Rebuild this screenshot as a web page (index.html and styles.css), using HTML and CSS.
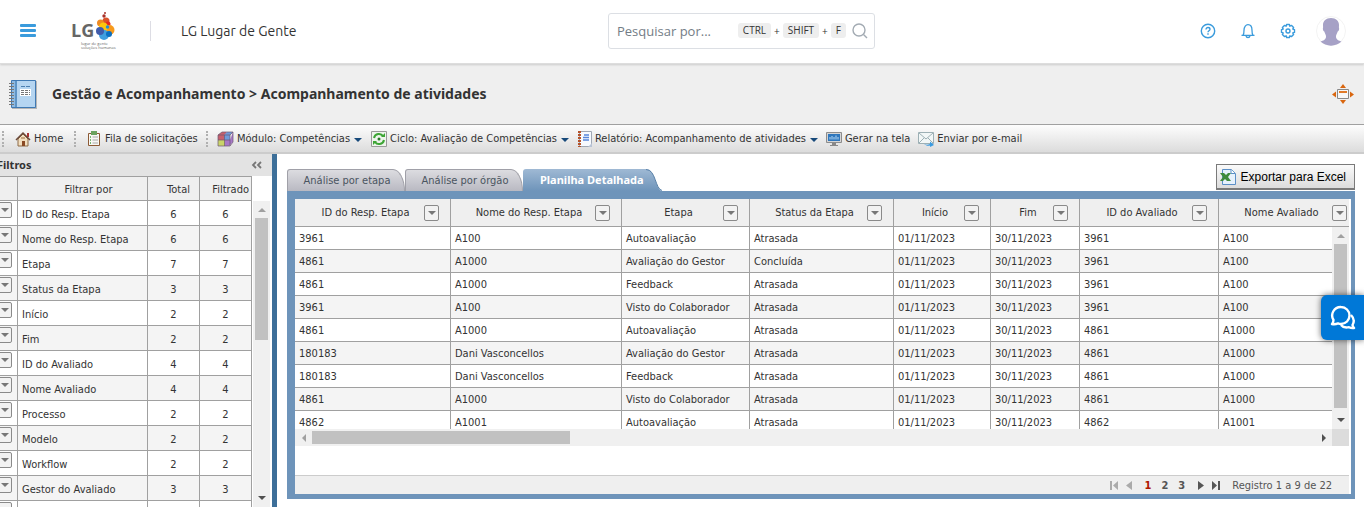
FILE: index.html
```html
<!DOCTYPE html>
<html lang="pt-BR">
<head>
    <meta charset="UTF-8">
    <meta name="viewport" content="width=device-width, initial-scale=1.0">
    <title>Acompanhamento de atividades</title>
    <link rel="stylesheet" href="styles.css">
</head>
<body>
    <!-- Top bar -->
    <header class="topbar">
        <button type="button" class="icon-btn menu-btn" aria-label="Menu">
            <svg width="16" height="14" viewBox="0 0 16 14" fill="#3a9bdc"><rect width="16" height="3" rx="1"/><rect y="5" width="16" height="3" rx="1"/><rect y="10" width="16" height="3" rx="1"/></svg>
        </button>
        <a href="#" class="logo" aria-label="LG Lugar de Gente">
            <span class="logo-name">LG</span>
            <svg class="logo-drops" width="20" height="30" viewBox="0 0 20 30">
                <circle cx="9" cy="2" r="1" fill="#a8322a"/><circle cx="8" cy="5" r="1.700" fill="#a8322a"/>
                <circle cx="10" cy="10" r="3.500" fill="#d9532c"/><circle cx="4.500" cy="12" r="3.500" fill="#ee8a22"/>
                <circle cx="12" cy="13" r="2.500" fill="#e3281f"/><circle cx="13.500" cy="19" r="5" fill="#f79a1c"/>
                <circle cx="7.500" cy="16" r="4.500" fill="#fcc60e"/><circle cx="8" cy="24" r="5" fill="#3f9fe0"/>
                <circle cx="4" cy="20" r="4" fill="#3f5cab"/><circle cx="13" cy="23" r="3" fill="#0b6fc0"/>
                <circle cx="11.500" cy="16" r="1.700" fill="#1f8fd6"/>
            </svg>
            <small class="logo-tag">lugar de gente<br>soluções humanas</small>
        </a>
        <span class="company">LG Lugar de Gente</span>
        <div class="search">
            <input type="text" placeholder="Pesquisar por..." aria-label="Pesquisar por">
            <kbd>CTRL</kbd>+<kbd>SHIFT</kbd>+<kbd>F</kbd>
            <svg class="lens" width="16" height="16" viewBox="0 0 16 16" fill="none" stroke="#a3abb3" stroke-width="1.4"><circle cx="7" cy="7" r="6"/><path d="M11.5 11.5L15 15"/></svg>
        </div>
        <div class="user">
            <button type="button" class="icon-btn" aria-label="Ajuda">
                <svg width="16" height="16" viewBox="0 0 16 16" fill="none" stroke="#3a9bdc" stroke-width="1.4"><circle cx="8" cy="8" r="6.7"/><path d="M6 6.4c0-2.7 4-2.5 4-.2 0 1.500-2 1.500-2 3"/><path d="M8 10.300v1.500"/></svg>
            </button>
            <button type="button" class="icon-btn" aria-label="Notificações">
                <svg width="16" height="16" viewBox="0 0 16 16" fill="none" stroke="#3a9bdc" stroke-width="1.3"><path d="M1.500 12.300h13M3 12.300c1-1 1-2 1-5 0-7.500 8-7.500 8 0 0 3 0 4 1 5M6 13c.5 2 3.500 2 4 0"/></svg>
            </button>
            <button type="button" class="icon-btn" aria-label="Configurações">
                <svg width="16" height="16" viewBox="0 0 16 16" fill="none" stroke="#3a9bdc" stroke-width="1.4" stroke-linejoin="round"><path d="M6.600 1.500h2.800l.5 1.700 1.700-.8 2 2-.8 1.700 1.700.5v2.800l-1.700.5.8 1.700-2 2-1.700-.8-.5 1.700H6.600l-.5-1.700-1.700.8-2-2 .8-1.700-1.700-.5V6.600l1.700-.5-.8-1.700 2-2 1.700.8z"/><circle cx="8" cy="8" r="2"/></svg>
            </button>
            <svg class="avatar" width="30" height="30" viewBox="0 0 30 30"><circle cx="15" cy="15" r="14.500" fill="#fff" stroke="#f3f3f3"/><path d="M15 2c5 0 8 3 8 7 0 1-.2 2 0 3 .6 2-.8 3-1.300 3.500-.7 2.500-1.700 3-1.700 5 0 3.500 3 4 5.500 5-5.500 5.500-15.500 5.500-21 0 2.500-1 5.500-1.500 5.500-5 0-2-1-2.500-1.700-5C7.800 15 6.400 14 7 12c.2-1 0-2 0-3 0-4 3-7 8-7z" fill="#a6a1c6"/></svg>
        </div>
    </header>

    <!-- Page title -->
    <section class="title-bar">
        <svg width="30" height="30" viewBox="0 0 30 30">
            <path d="M4 2h25v28H4z" fill="#b5b5b5"/>
            <path d="M3.500 1.500h24v27h-24z" fill="#8fbbe3" stroke="#3f79b3"/><path d="M9 2h18v26H9z" fill="#b5d5f1"/><path d="M8 2v26" stroke="#2f6ea9"/>
            <path d="M13 7.500h9" stroke="#4c7fb0" stroke-dasharray="4 1"/><path d="M12 10h11v7H12z" fill="#fff"/><path d="M13 11.500h9M13 13.500h9M13 15.500h9" stroke="#777" stroke-dasharray="3 1"/>
            <path d="M3.500 4v24" stroke="#777" stroke-width="5" stroke-dasharray="1 2"/>
        </svg>
        <h1>Gestão e Acompanhamento &gt; Acompanhamento de atividades</h1>
        <button type="button" class="icon-btn expand" aria-label="Expandir">
            <svg width="22" height="20" viewBox="0 0 22 20"><path d="M11 0l3 4H8zM11 20l3-4H8zM0 10.500l4-3v6zM22 10.500l-4-3v6z" fill="#d9660f"/><path d="M5.500 5.500h11v9h-11z" fill="#f7f7f7" stroke="#888"/><path d="M7 8h8" stroke="#e07a28" stroke-width="2"/></svg>
        </button>
    </section>

    <!-- Toolbar -->
    <nav class="toolbar">
        <span class="grip"></span>
        <a href="#" class="tool tool-home">
            <svg width="16" height="16" viewBox="0 0 16 16"><path d="M12 2h2v4h-2z" fill="#a33"/><path d="M3 8l5-5 5 5v7H3z" fill="#f2dfc0" stroke="#8d6b47"/><path d="M1 9l7-7 7 7" fill="none" stroke="#6b4a3a" stroke-width="1.500"/><path d="M7 10h3v5H7z" fill="#8a4a24"/><path d="M6 7h4" stroke="#9b6c3f"/></svg>
            Home
        </a>
        <span class="grip"></span>
        <a href="#" class="tool tool-queue">
            <svg width="14" height="16" viewBox="0 0 14 16"><path d="M1.500 2.500h11v12h-11z" fill="#f8f8f4" stroke="#8c5a35"/><path d="M4 0h6v4H4z" fill="#6ba35e"/><path d="M3 6h1M3 9h1M3 12h1" stroke="#49a349" stroke-width="1.500"/><path d="M5.500 6H11M5.500 9H11M5.500 12H11" stroke="#a8a8a8"/></svg>
            Fila de solicitações
        </a>
        <span class="grip"></span>
        <a href="#" class="tool tool-drop">
            <svg width="17" height="16" viewBox="0 0 17 16"><path d="M1 4l4-3h5L8 4v5H1z" fill="#c8606c"/><path d="M7 4l3-3h6l-3 3v5H7z" fill="#6f9ada"/><path d="M1 9h7v6H1z" fill="#c9d46a"/><path d="M8 9h5l3-8v10l-4 4H8z" fill="#a878c8"/><path d="M1 4h12v11H1zM7.500 4v11M1 9h12M1 4l4-3h11v10l-3 4M13 4l3-3" fill="none" stroke="#6a5870" stroke-width=".7"/></svg>
            Módulo: Competências
            <i class="caret"></i>
        </a>
        <a href="#" class="tool tool-drop">
            <svg width="16" height="16" viewBox="0 0 16 16"><path d="M.5.5h15v15H.5z" fill="#eef4ec" stroke="#9a9a9a"/><path d="M3 7c1-5 7-5 9-2M13 9c-1 5-7 5-9 2" fill="none" stroke="#3da535" stroke-width="2"/><path d="M10 6h4V2zM6 10H2v4z" fill="#3da535"/><circle cx="8" cy="8" r="1.500" fill="#277a28"/></svg>
            Ciclo: Avaliação de Competências
            <i class="caret"></i>
        </a>
        <a href="#" class="tool tool-drop">
            <svg width="14" height="16" viewBox="0 0 14 16"><path d="M1.500.5h12v15h-12z" fill="#f7faff" stroke="#a0a8b4"/><path d="M1.500 0v16" stroke="#b5532b" stroke-width="3" stroke-dasharray="2 1"/><path d="M6 4h5M5 6.500h6M5 9h6" stroke="#5686dc" stroke-width="1.300"/><path d="M14 12l-4 4h4z" fill="#b9c4d6"/></svg>
            Relatório: Acompanhamento de atividades
            <i class="caret"></i>
        </a>
        <a href="#" class="tool tool-action">
            <svg width="16" height="16" viewBox="0 0 16 16"><path d="M.5 1.500h15v10H.5z" fill="#d5d5d5" stroke="#8c8c8c"/><path d="M2 3h12v7H2z" fill="#2f77bd"/><path d="M4 8.500V6M6 8.500V5M8 8.500V6M10 8.500V4.500M12 8.500V6" stroke="#b9dcf7"/><path d="M6 12h4v2h2v1H4v-1h2z" fill="#888"/></svg>
            Gerar na tela
        </a>
        <a href="#" class="tool tool-action">
            <svg width="16" height="16" viewBox="0 0 16 16"><path d="M.5 1.500h15v11H.5z" fill="#f2f7f7" stroke="#9db0b5"/><path d="M1 2l7 6 7-6M1 12l5-5M15 12l-5-5" fill="none" stroke="#9db0b5"/><path d="M6 13c2 1 4 1 6 0v-2.500l4 3.500-4 2v-1.500c-2 .5-4 .3-6-1.500z" fill="#3b9be0"/></svg>
            Enviar por e-mail
        </a>
    </nav>

    <main class="workspace">
        <!-- Filters -->
        <aside class="filters">
            <div class="filters-head">
                <h2>Filtros</h2>
                <button type="button" class="icon-btn" aria-label="Recolher filtros">
                    <svg width="11" height="8" viewBox="0 0 11 8" fill="none" stroke="#777" stroke-width="1.800"><path d="M5 1L2 4l3 3M10 1L7 4l3 3"/></svg>
                </button>
            </div>
            <div class="filters-body">
                <table class="filter-table">
                    <colgroup><col class="f-btn"><col class="f-name"><col class="f-num"><col class="f-num"></colgroup>
                    <thead><tr><th></th><th class="label">Filtrar por</th><th class="num">Total</th><th class="num">Filtrado</th></tr></thead>
                    <tbody>
                        <tr><td><button type="button" class="drop" aria-label="Filtrar"></button></td><td>ID do Resp. Etapa</td><td>6</td><td>6</td></tr>
                        <tr><td><button type="button" class="drop" aria-label="Filtrar"></button></td><td>Nome do Resp. Etapa</td><td>6</td><td>6</td></tr>
                        <tr><td><button type="button" class="drop" aria-label="Filtrar"></button></td><td>Etapa</td><td>7</td><td>7</td></tr>
                        <tr><td><button type="button" class="drop" aria-label="Filtrar"></button></td><td>Status da Etapa</td><td>3</td><td>3</td></tr>
                        <tr><td><button type="button" class="drop" aria-label="Filtrar"></button></td><td>Início</td><td>2</td><td>2</td></tr>
                        <tr><td><button type="button" class="drop" aria-label="Filtrar"></button></td><td>Fim</td><td>2</td><td>2</td></tr>
                        <tr><td><button type="button" class="drop" aria-label="Filtrar"></button></td><td>ID do Avaliado</td><td>4</td><td>4</td></tr>
                        <tr><td><button type="button" class="drop" aria-label="Filtrar"></button></td><td>Nome Avaliado</td><td>4</td><td>4</td></tr>
                        <tr><td><button type="button" class="drop" aria-label="Filtrar"></button></td><td>Processo</td><td>2</td><td>2</td></tr>
                        <tr><td><button type="button" class="drop" aria-label="Filtrar"></button></td><td>Modelo</td><td>2</td><td>2</td></tr>
                        <tr><td><button type="button" class="drop" aria-label="Filtrar"></button></td><td>Workflow</td><td>2</td><td>2</td></tr>
                        <tr><td><button type="button" class="drop" aria-label="Filtrar"></button></td><td>Gestor do Avaliado</td><td>3</td><td>3</td></tr>
                        <tr><td><button type="button" class="drop" aria-label="Filtrar"></button></td><td></td><td></td><td></td></tr>
                    </tbody>
                </table>
                <div class="vscroll">
                    <i class="arrow up"></i><span class="thumb"></span><i class="arrow down"></i>
                </div>
            </div>
        </aside>
        <div class="splitter"></div>

        <!-- Report -->
        <section class="report">
            <div class="report-top">
                <div class="tabs">
                    <button type="button" class="tab">Análise por etapa</button>
                    <button type="button" class="tab">Análise por órgão</button>
                    <button type="button" class="tab active"><span>Planilha Detalhada</span><svg width="16" height="22" viewBox="0 0 16 22"><defs><linearGradient id="cap" x1="0" y1="0" x2="0" y2="1"><stop offset="0" stop-color="#9fb9d4"/><stop offset="1" stop-color="#6e94ba"/></linearGradient></defs><path d="M0 0c10 0 9 20 16 22H0z" fill="url(#cap)"/><path d="M0 .5c10 0 9 19.500 16 21" fill="none" stroke="#5b82a8"/></svg></button>
                </div>
                <button type="button" class="export">
                    <svg width="16" height="16" viewBox="0 0 16 16"><path d="M2.500.5h9l4 4v11h-13z" fill="#e6f1fc" stroke="#5b8fc7"/><path d="M11 .5v4h4" fill="#fff" stroke="#5b8fc7"/><path d="M0 4h4l2 2 2-2h3L8 8l3 4H7L5 10l-2 2H0l3-4z" fill="#3f8b3c"/></svg>
                    Exportar para Excel
                </button>
            </div>
            <div class="sheet">
                <div class="grid">
                    <table class="data">
                        <colgroup><col class="c-id"><col class="c-name"><col class="c-step"><col class="c-status"><col class="c-start"><col class="c-end"><col class="c-eid"><col class="c-ename"></colgroup>
                        <thead>
                            <tr>
                                <th><div><span>ID do Resp. Etapa</span><button type="button" class="drop" aria-label="Filtrar"></button></div></th>
                                <th><div><span>Nome do Resp. Etapa</span><button type="button" class="drop" aria-label="Filtrar"></button></div></th>
                                <th><div><span>Etapa</span><button type="button" class="drop" aria-label="Filtrar"></button></div></th>
                                <th><div><span>Status da Etapa</span><button type="button" class="drop" aria-label="Filtrar"></button></div></th>
                                <th><div><span>Início</span><button type="button" class="drop" aria-label="Filtrar"></button></div></th>
                                <th><div><span>Fim</span><button type="button" class="drop" aria-label="Filtrar"></button></div></th>
                                <th><div><span>ID do Avaliado</span><button type="button" class="drop" aria-label="Filtrar"></button></div></th>
                                <th><div><span>Nome Avaliado</span><button type="button" class="drop" aria-label="Filtrar"></button></div></th>
                            </tr>
                        </thead>
                        <tbody>
                            <tr><td>3961</td><td>A100</td><td>Autoavaliação</td><td>Atrasada</td><td>01/11/2023</td><td>30/11/2023</td><td>3961</td><td>A100</td></tr>
                            <tr><td>4861</td><td>A1000</td><td>Avaliação do Gestor</td><td>Concluída</td><td>01/11/2023</td><td>30/11/2023</td><td>3961</td><td>A100</td></tr>
                            <tr><td>4861</td><td>A1000</td><td>Feedback</td><td>Atrasada</td><td>01/11/2023</td><td>30/11/2023</td><td>3961</td><td>A100</td></tr>
                            <tr><td>3961</td><td>A100</td><td>Visto do Colaborador</td><td>Atrasada</td><td>01/11/2023</td><td>30/11/2023</td><td>3961</td><td>A100</td></tr>
                            <tr><td>4861</td><td>A1000</td><td>Autoavaliação</td><td>Atrasada</td><td>01/11/2023</td><td>30/11/2023</td><td>4861</td><td>A1000</td></tr>
                            <tr><td>180183</td><td>Dani Vasconcellos</td><td>Avaliação do Gestor</td><td>Atrasada</td><td>01/11/2023</td><td>30/11/2023</td><td>4861</td><td>A1000</td></tr>
                            <tr><td>180183</td><td>Dani Vasconcellos</td><td>Feedback</td><td>Atrasada</td><td>01/11/2023</td><td>30/11/2023</td><td>4861</td><td>A1000</td></tr>
                            <tr><td>4861</td><td>A1000</td><td>Visto do Colaborador</td><td>Atrasada</td><td>01/11/2023</td><td>30/11/2023</td><td>4861</td><td>A1000</td></tr>
                            <tr><td>4862</td><td>A1001</td><td>Autoavaliação</td><td>Atrasada</td><td>01/11/2023</td><td>30/11/2023</td><td>4862</td><td>A1001</td></tr>
                        </tbody>
                    </table>
                    <div class="vscroll">
                        <i class="arrow up"></i><span class="thumb"></span><i class="arrow down"></i>
                    </div>
                </div>
                <div class="hscroll">
                    <i class="arrow left"></i><span class="thumb"></span><i class="arrow right"></i><span class="corner"></span>
                </div>
                <div class="pager">
                    <button type="button" class="icon-btn" aria-label="Primeira" disabled><svg width="9" height="9" viewBox="0 0 9 9" fill="#aaa"><path d="M0 0h2v9H0zM8 0v9L3 4.500z"/></svg></button>
                    <button type="button" class="icon-btn" aria-label="Anterior" disabled><svg width="6" height="9" viewBox="0 0 6 9" fill="#aaa"><path d="M6 0v9L0 4.500z"/></svg></button>
                    <span class="pages"><a href="#" class="current">1</a><a href="#">2</a><a href="#">3</a></span>
                    <button type="button" class="icon-btn" aria-label="Próxima"><svg width="6" height="9" viewBox="0 0 6 9" fill="#555"><path d="M0 0v9l6-4.500z"/></svg></button>
                    <button type="button" class="icon-btn" aria-label="Última"><svg width="9" height="9" viewBox="0 0 9 9" fill="#555"><path d="M7 0h2v9H7zM1 0v9l5-4.500z"/></svg></button>
                    <span class="count">Registro 1 a 9 de 22</span>
                </div>
            </div>
        </section>
    </main>

    <button type="button" class="chat" aria-label="Chat">
        <svg width="26" height="26" viewBox="0 0 26 26" fill="none" stroke="#fff" stroke-width="2.400" stroke-linejoin="round"><path d="M11 2a8.500 8.500 0 0 1 0 17c-1 0-2-.2-3-.6-2 .9-4 1.100-6 .6 1-1 1.500-2.300 1.500-4A8.500 8.500 0 0 1 11 2z"/><path d="M21 10c3 3 3.300 7 1.500 10 .2 1.400.7 2.400 1.500 3-2 .3-3.500 0-5-.8-3 .8-6 .3-8-2.200"/></svg>
    </button>
</body>
</html>
```
FILE: styles.css
```css
* {
    box-sizing: border-box;
}
body {
    margin: 0;
    height: 100vh;
    display: flex;
    flex-direction: column;
    overflow: hidden;
    background: #ffffff;
    color: #333333;
    font-family: Tahoma, "DejaVu Sans Condensed", "Noto Sans", sans-serif;
    font-size: 11px;
}
h1, h2 {
    margin: 0;
}
svg {
    display: block;
    flex: none;
}
button {
    font-family: inherit;
    cursor: pointer;
}
a {
    color: inherit;
    text-decoration: none;
}
.icon-btn {
    padding: 0;
    border: none;
    background: none;
}

/* Top bar */
.topbar {
    position: relative;
    z-index: 1;
    flex: none;
    height: 64px;
    display: flex;
    align-items: center;
    padding: 0 18px 2px 20px;
    border-bottom: 1px solid #dddddd;
    box-shadow: 0 1px 2px rgba(0, 0, 0, 0.15);
    background: #ffffff;
    font-family: "Open Sans", sans-serif;
}
.logo {
    display: grid;
    grid-template-columns: 25px 20px;
    row-gap: 1px;
    align-items: end;
    margin-left: 35px;
    color: #666666;
}
.logo-name {
    font: bold 18px/22px "Open Sans", sans-serif;
}
.logo-tag {
    grid-column: 1 / 3;
    padding-left: 10px;
    font-size: 4px;
    line-height: 4px;
}
.company {
    margin-left: 34px;
    padding-left: 30px;
    border-left: 1px solid #dddde4;
    font: 14px/20px Ubuntu, "Noto Sans", sans-serif;
}
.search {
    width: 267px;
    height: 36px;
    margin-left: auto;
    display: flex;
    align-items: center;
    gap: 3px;
    padding: 0 6px 0 8px;
    border: 1px solid #dcdfe4;
    border-radius: 3px;
    font-size: 10px;
}
.search input {
    flex: 1;
    min-width: 0;
    padding: 0;
    border: none;
    outline: none;
    font: 13px "Open Sans", sans-serif;
}
.search input::placeholder {
    color: #737d86;
}
.search kbd {
    padding: 0 5px;
    border-radius: 3px;
    background: #eeeeee;
    font: 10px/15px "Open Sans", sans-serif;
}
.lens {
    margin-left: 3px;
}
.user {
    flex: 0 1 471px;
    display: flex;
    justify-content: flex-end;
    align-items: center;
    gap: 24px;
}
.avatar {
    margin-left: -4px;
}

/* Page title */
.title-bar {
    flex: none;
    height: 60px;
    display: flex;
    align-items: center;
    gap: 14px;
    padding: 0 10px 0 8px;
    background: #efefef;
}
.title-bar h1 {
    font: bold 14px/20px Tahoma, "Noto Sans", sans-serif;
}
.expand {
    margin-left: auto;
}

/* Toolbar */
.toolbar {
    flex: none;
    height: 30px;
    display: flex;
    align-items: center;
    border-top: 1px solid #a0a0a0;
    border-bottom: 2px solid #cccccc;
    background: linear-gradient(#fdfdfd, #dcdcdc);
}
.grip {
    height: 16px;
    margin-left: 2px;
    border-left: 2px dotted #b0b0b0;
}
.tool {
    display: flex;
    align-items: center;
    gap: 3px;
    white-space: nowrap;
}
.tool-home {
    width: 57px;
    margin-left: 11px;
}
.tool-queue {
    width: 117px;
    margin-left: 11px;
    gap: 4px;
}
.tool-drop {
    margin-left: 9px;
}
.caret {
    margin: 2px 0 0 1px;
    border: 4px solid transparent;
    border-top-color: #17497a;
    border-bottom: none;
}
.tool-action {
    margin-left: 8px;
}

/* Workspace */
.workspace {
    flex: 1;
    min-height: 0;
    display: flex;
}
.filters {
    width: 272px;
    overflow: hidden;
}
.filters-head {
    height: 22px;
    display: flex;
    align-items: center;
    justify-content: space-between;
    margin-left: -3px;
    padding-right: 10px;
    background: #e3e3e3;
}
.filters-head h2 {
    font: bold 11px/16px Tahoma, "Noto Sans", sans-serif;
}
.filters-body {
    height: calc(100% - 22px);
    display: flex;
    gap: 1px;
    margin-left: -8px;
}
.splitter {
    width: 5px;
    background: #3d6f99;
}
table {
    flex: none;
    align-self: flex-start;
    border-collapse: separate;
    border-spacing: 0;
    table-layout: fixed;
}
th, td {
    padding: 0;
    border-right: 1px solid #a0a0a0;
    border-bottom: 1px solid #a0a0a0;
    font-weight: normal;
    white-space: nowrap;
}
th {
    background: #efefef;
}
tbody tr:nth-child(even) {
    background: #f4f4f4;
}
.filter-table {
    width: 260px;
}
.filter-table th, .filter-table td {
    height: 25px;
    padding-top: 2px;
    text-align: center;
}
.filter-table th {
    border-top: 1px solid #a0a0a0;
}
.filter-table .label {
    padding-left: 12px;
}
.filter-table .num {
    padding-right: 2px;
    text-align: right;
}
.filter-table th:nth-child(3) {
    padding-right: 9px;
}
.filter-table td:nth-child(2) {
    padding-left: 4px;
    text-align: left;
}
.filter-table td:first-child {
    padding: 1px 5px 0 0;
    text-align: right;
    vertical-align: top;
}
.f-btn {
    width: 26px;
}
.f-name {
    width: 130px;
}
.f-num {
    width: 52px;
}

/* Small drop-down button */
.drop {
    width: 15px;
    height: 16px;
    display: inline-flex;
    align-items: center;
    justify-content: center;
    flex: none;
    padding: 0;
    border: 1px solid #8a8a8a;
    border-radius: 2px;
    background: #f2f2f2;
    vertical-align: top;
}
.drop::before {
    content: "";
    border: 4px solid transparent;
    border-top-color: #777777;
    border-bottom: none;
}

/* Scrollbars */
.vscroll {
    width: 17px;
    display: flex;
    flex-direction: column;
    align-items: center;
    padding: 7px 0;
    background: #f0f0f0;
}
.filters .vscroll {
    margin-top: 25px;
}
.thumb {
    background: #c1c1c1;
}
.vscroll .thumb {
    width: 13px;
    height: 122px;
    margin-top: 6px;
}
.arrow {
    border: 4px solid transparent;
}
.up {
    border-top: none;
    border-bottom-color: #a0a0a0;
}
.down {
    margin-top: auto;
    border-bottom: none;
    border-top-color: #505050;
}
.left {
    border-left: none;
    border-right-color: #a0a0a0;
}
.right {
    margin-left: auto;
    border-right: none;
    border-left-color: #505050;
}

/* Report */
.report {
    flex: 1;
    min-width: 0;
    padding: 10px 9px 8px 10px;
}
.report-top {
    height: 27px;
    display: flex;
    justify-content: space-between;
}
.tabs {
    display: flex;
    align-items: flex-end;
}
.tab {
    width: 118px;
    height: 22px;
    padding: 0 0 0 2px;
    border: 1px solid #a0a0a8;
    border-bottom: none;
    border-radius: 3px 12px 0 0 / 3px 22px 0 0;
    background: linear-gradient(#dcdce0, #b9b9c2);
    color: #4a5460;
    font-size: 11px;
}
.tab.active {
    width: auto;
    display: flex;
    padding: 0;
    border: none;
    border-radius: 3px 0 0 0;
    background: none;
    color: #ffffff;
    font-family: Tahoma, "Noto Sans", sans-serif;
    font-weight: bold;
    line-height: 22px;
    white-space: nowrap;
}
.tab.active span {
    padding: 0 2px 0 17px;
    border-radius: 3px 0 0 0;
    background: linear-gradient(#9fb9d4, #6e94ba);
}
.export {
    height: 26px;
    display: flex;
    align-items: center;
    gap: 5px;
    padding: 0 8px 0 3px;
    border: 1px solid #7a7a7a;
    border-bottom-width: 2px;
    background: linear-gradient(#fafafa, #dcdcdc);
    color: #000000;
    font: 12px Arial, "Liberation Sans", sans-serif;
}
.sheet {
    padding-right: 2px;
    border: solid #6e94ba;
    border-width: 8px 4px 5px 8px;
}
.grid {
    position: relative;
    height: 230px;
    overflow: hidden;
}
.data {
    width: 1064px;
}
.data th {
    height: 28px;
}
.data th div {
    display: flex;
    align-items: center;
    padding: 0 11px 0 12px;
}
.data th span {
    flex: 1;
}
.data td {
    height: 23px;
    padding-left: 4px;
}
.c-id { width: 156px; }
.c-name { width: 171px; }
.c-step { width: 128px; }
.c-status { width: 144px; }
.c-start { width: 97px; }
.c-end { width: 89px; }
.c-eid { width: 139px; }
.c-ename { width: 140px; }
.grid .vscroll {
    position: absolute;
    top: 28px;
    right: 0;
    bottom: 0;
}
.grid .thumb {
    height: 164px;
}
.hscroll {
    height: 17px;
    display: flex;
    align-items: center;
    padding-left: 7px;
    background: #f0f0f0;
}
.hscroll .thumb {
    width: 258px;
    height: 13px;
    margin-left: 6px;
}
.corner {
    width: 17px;
    height: 17px;
    margin-left: 6px;
    background: #dcdcdc;
}
.pager {
    height: 19px;
    display: flex;
    align-items: center;
    justify-content: flex-end;
    gap: 7px;
    margin-top: 29px;
    padding-right: 17px;
    border-top: 1px solid #cccccc;
    background: #efefef;
    color: #555555;
}
.pages {
    display: flex;
    gap: 10px;
    margin: 0 6px;
    font-weight: bold;
}
.pages .current {
    color: #b01800;
}
.count {
    margin-left: 5px;
}

/* Chat button */
.chat {
    position: fixed;
    right: 0;
    top: 295px;
    z-index: 2;
    width: 43px;
    height: 45px;
    display: flex;
    align-items: center;
    justify-content: center;
    padding: 0;
    border: none;
    border-radius: 6px 0 0 6px;
    background: #0078d7;
    box-shadow: 0 0 6px rgba(0, 0, 0, 0.6);
}
```
